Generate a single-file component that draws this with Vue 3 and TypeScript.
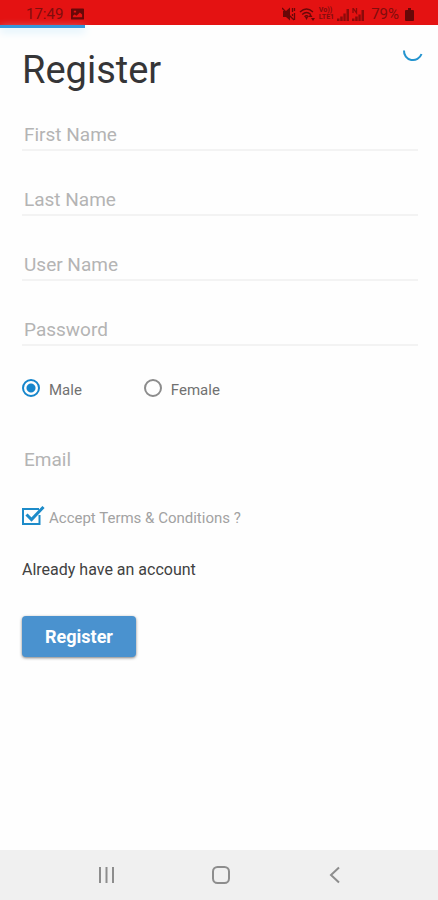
<script setup lang="ts">
import { reactive, ref } from 'vue'

interface Field {
  key: 'firstName' | 'lastName' | 'userName' | 'password'
  label: string
  type: string
}

const fields: Field[] = [
  { key: 'firstName', label: 'First Name', type: 'text' },
  { key: 'lastName', label: 'Last Name', type: 'text' },
  { key: 'userName', label: 'User Name', type: 'text' },
  { key: 'password', label: 'Password', type: 'password' },
]

const form = reactive({
  firstName: '',
  lastName: '',
  userName: '',
  password: '',
  email: '',
  gender: 'male',
  accepted: true,
})

const genders = [
  { value: 'male', label: 'Male' },
  { value: 'female', label: 'Female' },
]

const progress = ref(19.4)
</script>

<template>
  <div class="screen">
    <header class="status">
      <div class="status-group">
        <span>17:49</span>
        <svg class="picture" viewBox="0 0 14 12" aria-hidden="true">
          <path fill-rule="evenodd" d="M1 0h12a1 1 0 0 1 1 1v10a1 1 0 0 1-1 1H1a1 1 0 0 1-1-1V1a1 1 0 0 1 1-1zm1 9.500h10V6.500L9.500 4.500 6 8 4 6.500 2 8zM3 2.500v2h2.500v-2z" />
        </svg>
      </div>
      <div class="status-group right">
        <svg class="mute" viewBox="0 0 14 14" aria-hidden="true">
          <path d="M1 4h3l4-3.500v13L4 10H1z" />
          <path class="line" d="M0 1l12 12M10.500 1v4M10.500 7v2M12.500 1v3M12.500 6v7" />
        </svg>
        <svg class="wifi" viewBox="0 0 17 14" aria-hidden="true">
          <path class="line" d="M1 5q6.500-6 13 0M3.200 7.500q4.300-4 8.600 0M5.500 9.800q2-2 4 0" />
          <path d="M6 10h3l-1.500 3zM11.500 7l2 3h-4zM14 14l-2-3h4z" />
        </svg>
        <span class="volte"><span>Vo))</span><span>LTE1</span></span>
        <svg class="signal" viewBox="0 0 12 13" aria-hidden="true">
          <path d="M0 13v-2.500h2.500V13zM3.200 13V8.500h2.500V13zM6.400 13V5.500h2.300V13zM9.500 13V1H12v12z" />
        </svg>
        <svg class="signal" viewBox="0 0 12 13" aria-hidden="true">
          <path d="M0 13v-2.500h2.500V13zM3.200 13V8.500h2.500V13zM6.400 13V6.500h2.300V13zM9.500 13V2H12v11z" />
          <path class="line" d="M1 5V0l3.500 5V0" />
        </svg>
        <span class="percent">79%</span>
        <svg class="battery" viewBox="0 0 9 13" aria-hidden="true">
          <path d="M3 0h3v2h2a1 1 0 0 1 1 1v9a1 1 0 0 1-1 1H1a1 1 0 0 1-1-1V3a1 1 0 0 1 1-1h2z" />
        </svg>
      </div>
      <div class="progress" :style="{ width: progress + '%' }"></div>
    </header>

    <main class="content">
      <div class="heading">
        <h1>Register</h1>
        <svg class="spinner" viewBox="0 0 22 22" aria-hidden="true">
          <path d="M3 8.500a9 9 0 0 0 17.500 3.500" />
        </svg>
      </div>

      <form @submit.prevent>
        <div class="fields">
          <input
            v-for="field in fields"
            :key="field.key"
            v-model="form[field.key]"
            class="field"
            :type="field.type"
            :placeholder="field.label"
            :aria-label="field.label"
          />
        </div>

        <div class="genders" role="radiogroup" aria-label="Gender">
          <label v-for="gender in genders" :key="gender.value" class="choice">
            <input v-model="form.gender" class="radio" type="radio" name="gender" :value="gender.value" />
            <span>{{ gender.label }}</span>
          </label>
        </div>

        <input v-model="form.email" class="field email" type="email" placeholder="Email" aria-label="Email" />

        <label class="terms">
          <input v-model="form.accepted" class="tick-input" type="checkbox" />
          <svg class="tick" viewBox="0 0 24 20" aria-hidden="true">
            <path class="box" d="M17 3H1v15h16.500V9" />
            <path v-if="form.accepted" class="mark" d="M4.500 8.500l5 5L21.500 1" />
          </svg>
          <span>Accept Terms &amp; Conditions ?</span>
        </label>

        <a class="login" href="#login">Already have an account</a>
        <button class="submit" type="submit">Register</button>
      </form>
    </main>

    <nav class="navbar" aria-label="System navigation">
      <button type="button" aria-label="Recent apps">
        <svg viewBox="0 0 20 20" aria-hidden="true"><path d="M3 2v16M9.500 2v16M16 2v16" /></svg>
      </button>
      <button type="button" aria-label="Home">
        <svg viewBox="0 0 20 20" aria-hidden="true"><rect x="2" y="2" width="16" height="16" rx="4.500" /></svg>
      </button>
      <button type="button" aria-label="Back">
        <svg viewBox="0 0 20 20" aria-hidden="true"><path d="M14 2.500L6 10l8 7.500" /></svg>
      </button>
    </nav>
  </div>
</template>

<style>
body {
  margin: 0;
  background: #fff;
}
</style>

<style scoped>
.screen {
  display: flex;
  flex-direction: column;
  min-height: 100vh;
  font-family: Roboto, "Liberation Sans", sans-serif;
  background: #fefefe;
}

.status {
  position: relative;
  display: flex;
  justify-content: space-between;
  box-sizing: border-box;
  height: 25px;
  padding: 3px 24px 0 26px;
  background: #e41212;
  color: #800d0d;
  font-size: 15px;
  line-height: 22px;
}

.status-group {
  display: flex;
  align-items: center;
  gap: 8px;
}

.status-group.right {
  gap: 3px;
}

.status svg {
  flex: none;
  fill: #680808;
}

.status .line {
  fill: none;
  stroke: #680808;
  stroke-width: 1.3;
}

.picture {
  width: 13px;
  height: 12px;
}

.mute {
  width: 14px;
  height: 14px;
}

.wifi {
  width: 17px;
  height: 14px;
}

.volte {
  display: flex;
  flex-direction: column;
  font-size: 7px;
  font-weight: 700;
  line-height: 7px;
}

.signal {
  width: 12px;
  height: 13px;
  opacity: 0.7;
}

.percent {
  margin: 0 3px 0 4px;
}

.battery {
  width: 9px;
  height: 13px;
}

.progress {
  position: absolute;
  top: 100%;
  left: 0;
  height: 3px;
  background: #3598dc;
  box-shadow: 0 3px 8px #bfe6fa;
}

.content {
  flex: 1;
  padding: 23px 20px 24px 22px;
}

.heading {
  display: flex;
  justify-content: space-between;
  align-items: flex-start;
  margin-right: -5px;
}

h1 {
  margin: 0;
  color: #353537;
  font-size: 38px;
  font-weight: 400;
  line-height: 44px;
}

.spinner {
  width: 22px;
  height: 22px;
  margin-top: -6px;
}

.spinner path {
  fill: none;
  stroke: #2494cf;
  stroke-width: 2;
}

form {
  display: flex;
  flex-direction: column;
  align-items: flex-start;
  margin-top: 27px;
}

.fields {
  display: flex;
  flex-direction: column;
  gap: 33px;
  width: 100%;
}

.field {
  box-sizing: border-box;
  width: 100%;
  height: 32px;
  padding: 0 2px;
  border: 0;
  border-bottom: 2px solid #f3f3f3;
  border-radius: 0;
  outline: none;
  background: transparent;
  color: #444;
  font-family: inherit;
  font-size: 19px;
}

.field::placeholder {
  color: #b4b4b4;
  opacity: 1;
}

.genders {
  display: flex;
  gap: 62px;
  margin-top: 28px;
}

.choice {
  display: flex;
  align-items: center;
  gap: 9px;
  color: #717171;
  font-size: 15px;
  line-height: 24px;
}

.choice span {
  padding-top: 4px;
}

.radio {
  appearance: none;
  box-sizing: border-box;
  width: 18px;
  height: 18px;
  margin: 0;
  border: 2px solid #8c8c8c;
  border-radius: 50%;
}

.radio:checked {
  border-color: #1686cc;
  background: radial-gradient(circle, #1686cc 4px, transparent 5px);
}

.email {
  margin-top: 42px;
  border-color: transparent;
}

.terms {
  position: relative;
  display: flex;
  align-items: center;
  gap: 3px;
  margin-top: 30px;
  color: #a2a2a2;
  font-size: 15px;
  line-height: 24px;
}

.tick-input {
  position: absolute;
  width: 20px;
  height: 20px;
  margin: 0;
  opacity: 0;
}

.tick {
  width: 24px;
  height: 20px;
  margin-bottom: 4px;
  fill: none;
  stroke: #1d8bc9;
}

.box {
  stroke-width: 2;
}

.mark {
  stroke-width: 3;
}

.login {
  margin-top: 28px;
  color: #414141;
  font-size: 16px;
  line-height: 24px;
  text-decoration: none;
}

.submit {
  height: 41px;
  margin-top: 34px;
  padding: 0 23px;
  border: 0;
  border-radius: 4px;
  background: #4a92cf;
  box-shadow: 0 1px 3px rgba(0, 0, 0, 0.5);
  color: #fff;
  font-family: inherit;
  font-size: 18px;
  font-weight: 700;
}

.navbar {
  display: flex;
  justify-content: center;
  gap: 94px;
  padding: 15px 0 15px 4px;
  background: #f0f0f0;
}

.navbar button {
  display: flex;
  padding: 0;
  border: 0;
  background: none;
}

.navbar svg {
  width: 20px;
  height: 20px;
  fill: none;
  stroke: #8d8d8d;
  stroke-width: 2;
}
</style>
